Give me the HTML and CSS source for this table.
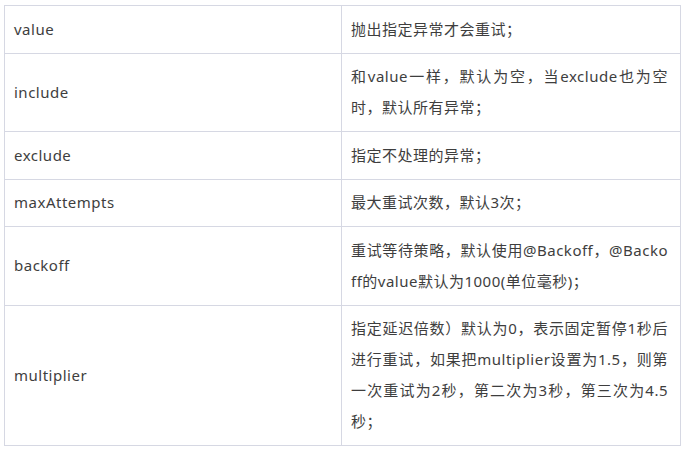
FILE: index.html
```html
<!DOCTYPE html>
<html lang="zh-CN">
<head>
<meta charset="utf-8">
<title>Retry 参数</title>
<link rel="stylesheet" href="styles.css">
</head>
<body>
<table class="params">
  <colgroup>
    <col class="col-name">
    <col class="col-desc">
  </colgroup>
  <tbody>
    <tr><td>value</td><td>抛出指定异常才会重试；</td></tr>
    <tr><td>include</td><td>和value一样，默认为空，当exclude也为空时，默认所有异常；</td></tr>
    <tr><td>exclude</td><td>指定不处理的异常；</td></tr>
    <tr><td>maxAttempts</td><td>最大重试次数，默认3次；</td></tr>
    <tr><td>backoff</td><td>重试等待策略，默认使用@Backoff，@Backoff的value默认为1000(单位毫秒)；</td></tr>
    <tr><td>multiplier</td><td>指定延迟倍数）默认为0，表示固定暂停1秒后进行重试，如果把multiplier设置为1.5，则第一次重试为2秒，第二次为3秒，第三次为4.5秒；</td></tr>
  </tbody>
</table>
</body>
</html>
```

FILE: styles.css
```css
html, body {
  margin: 0;
  padding: 0;
  background: #ffffff;
}

body {
  font-family: "Noto Sans", "Noto Sans CJK SC", sans-serif;
  font-size: 15px;
  letter-spacing: 0.5px;
  color: #3e3e3e;
}

.params {
  margin: 5px 0 0 4px;
  width: 677px;
  border-collapse: collapse;
  table-layout: fixed;
}

.col-name { width: 337px; }

.params td {
  border: 1px solid #d6d8e3;
  padding: 7.75px 12px 7.75px 9px;
  line-height: 31px;
  vertical-align: middle;
  word-break: break-all;
}

.params td + td {
  padding-left: 9px;
  text-align: justify;
}
```
